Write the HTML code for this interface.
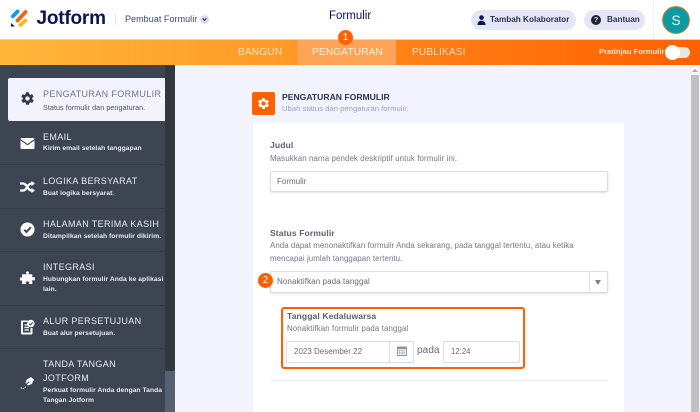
<!DOCTYPE html>
<html lang="id">
<head>
<meta charset="utf-8">
<style>
html,body{margin:0;padding:0;width:700px;height:412px;overflow:hidden;background:#f3f3fe;font-family:"Liberation Sans",sans-serif}
.a{position:absolute;white-space:nowrap;line-height:1}
.b{position:absolute;box-sizing:border-box}
.st{color:#e8ebf3;font-size:9px;letter-spacing:.37px}
.sd{color:#e8ebf3;font-size:6.7px;letter-spacing:.07px;font-weight:bold}
.sep{position:absolute;left:0;width:165px;height:1px;background:#343b46}
.lbl{color:#5c6070;font-size:8.6px;font-weight:bold;letter-spacing:.08px}
.d{color:#74778a;font-size:7.9px;letter-spacing:.1px}
</style>
</head>
<body>
<div class="b" style="left:0;top:0;width:700px;height:39px;background:#fff"></div>
<svg class="b" style="left:10px;top:8px" width="19" height="20" viewBox="0 0 19 20">
<path d="M2.800 8.300 L7.500 3.500" stroke="#0a9bf0" stroke-width="3.800" stroke-linecap="round"/>
<path d="M7.500 12.500 L15.500 4" stroke="#ff6100" stroke-width="3.800" stroke-linecap="round"/>
<path d="M10.500 17 L15.500 12.500" stroke="#ffb629" stroke-width="3.800" stroke-linecap="round"/>
<path d="M1 15 L1 18.500 L5 18.500 Z" fill="#0a1551"/>
</svg>
<div class="a" style="left:36.500px;top:9px;font-size:19px;font-weight:bold;color:#0a1551;letter-spacing:-.2px">Jotform</div>
<div class="b" style="left:115px;top:14px;width:1px;height:11px;background:#e3e5ee"></div>
<div class="a" style="left:125px;top:15px;font-size:9px;color:#3f4868;letter-spacing:.05px">Pembuat Formulir</div>
<div class="b" style="left:200px;top:15px;width:9px;height:9px;border-radius:50%;background:#d9dcf0"></div>
<svg class="b" style="left:202px;top:17px" width="5" height="5" viewBox="0 0 5 5"><path d="M.7 1.400 L2.500 3.400 L4.300 1.400" stroke="#2c3459" stroke-width="1.100" fill="none"/></svg>
<div class="a" style="left:329px;top:11px;font-size:11.500px;color:#0a1551">Formulir</div>

<div class="b" style="left:471px;top:10px;width:105px;height:20px;border-radius:10px;background:#e5e6f5"></div>
<svg class="b" style="left:477px;top:15px" width="9" height="10" viewBox="0 0 9 10"><circle cx="4.500" cy="2.600" r="2.300" fill="#0a1551"/><path d="M.5 10 C.5 6.800 2.300 5.800 4.500 5.800 C6.700 5.800 8.500 6.800 8.500 10 Z" fill="#0a1551"/></svg>
<div class="a" style="left:490px;top:15.500px;font-size:8.200px;font-weight:bold;color:#2b3358">Tambah Kolaborator</div>
<div class="b" style="left:584px;top:10px;width:61px;height:20px;border-radius:10px;background:#e5e6f5"></div>
<div class="b" style="left:591px;top:15px;width:10px;height:10px;border-radius:50%;background:#1d2338;color:#e5e6f5;font-size:7.500px;font-weight:bold;text-align:center;line-height:10px">?</div>
<div class="a" style="left:607px;top:15.500px;font-size:8.200px;font-weight:bold;color:#2b3358">Bantuan</div>
<div class="b" style="left:653px;top:0;width:1px;height:39px;background:#eceef5"></div>
<div class="b" style="left:662px;top:6px;width:28px;height:28px;border-radius:50%;background:#0e9aa3;border:1px solid #d9853c;color:#e4f7f8;font-size:14px;text-align:center;line-height:26px">S</div>

<div class="b" style="left:0;top:39px;width:700px;height:26px;background:linear-gradient(90deg,#ffb73a 0%,#ff9a26 40%,#ff7a12 65%,#ff6100 100%);border-top:1px solid #ffd089"></div>
<div class="b" style="left:297px;top:40px;width:99px;height:25px;background:#ffa456"></div>
<div class="a" style="left:238px;top:48px;font-size:10.200px;color:#ffe3c0;letter-spacing:.1px">BANGUN</div>
<div class="a" style="left:312px;top:48px;font-size:10.200px;color:#fff0e0;letter-spacing:.1px">PENGATURAN</div>
<div class="a" style="left:412px;top:48px;font-size:10.200px;color:#ffdcc0;letter-spacing:.1px">PUBLIKASI</div>
<div class="b" style="left:338px;top:30px;width:15px;height:15px;border-radius:50%;background:#ff6100;color:#fff;font-size:10px;text-align:center;line-height:15px">1</div>
<div class="a" style="left:599px;top:48px;font-size:7.600px;font-weight:bold;color:#ffe9d6">Pratinjau Formulir</div>
<div class="b" style="left:666px;top:47px;width:24px;height:11px;border-radius:6px;background:#e4e8dd"></div>
<div class="b" style="left:665px;top:45px;width:15px;height:15px;border-radius:50%;background:#fff"></div>

<!-- sidebar -->
<div class="b" style="left:0;top:65px;width:175px;height:347px;background:#3e4552"></div>
<div class="b" style="left:165px;top:65px;width:10px;height:306px;background:#33383f;border-radius:0 0 3px 3px"></div>
<div class="b" style="left:165px;top:371px;width:10px;height:41px;background:#566070"></div>
<div class="b" style="left:8px;top:78px;width:157px;height:43px;background:#f3f3fe;border-radius:2px 0 0 2px"></div>
<svg class="b" style="left:20px;top:91px" width="15" height="15" viewBox="0 0 24 24"><path fill="#343b46" d="M19.400 13c.1-.3.1-.7.1-1s0-.7-.1-1l2.100-1.600c.2-.2.2-.4.1-.6l-2-3.500c-.1-.2-.4-.3-.6-.2l-2.500 1c-.5-.4-1.100-.7-1.700-1l-.4-2.600c0-.3-.2-.5-.5-.5h-4c-.3 0-.5.2-.5.5l-.4 2.600c-.6.3-1.200.6-1.700 1l-2.500-1c-.2-.1-.5 0-.6.2l-2 3.500c-.1.200-.1.500.1.600L4.600 11c-.1.300-.1.700-.1 1s0 .7.100 1l-2.100 1.600c-.2.200-.2.400-.1.600l2 3.500c.1.200.4.300.6.200l2.500-1c.5.400 1.100.7 1.700 1l.4 2.600c0 .3.2.5.5.5h4c.3 0 .5-.2.5-.5l.4-2.600c.6-.3 1.200-.6 1.700-1l2.500 1c.2.100.5 0 .6-.2l2-3.500c.1-.2.1-.5-.1-.6zM12 15.500a3.500 3.500 0 1 1 0-7 3.500 3.500 0 0 1 0 7z"/></svg>
<div class="a" style="left:43px;top:89.500px;font-size:9px;color:#6f7488;letter-spacing:.37px">PENGATURAN FORMULIR</div>
<div class="a" style="left:43px;top:103.500px;font-size:7.200px;color:#4b5064;letter-spacing:.05px">Status formulir dan pengaturan.</div>

<svg class="b" style="left:20px;top:138px" width="15" height="11" viewBox="0 0 15 11"><path fill="#fff" d="M.5 1 Q.5 0 1.500 0 H13.500 Q14.500 0 14.500 1 L7.500 6 Z"/><path fill="#fff" d="M.5 2.400 L7.500 7.400 L14.500 2.400 V10 Q14.500 11 13.500 11 H1.500 Q.5 11 .5 10 Z"/></svg>
<div class="a st" style="left:43px;top:133px">EMAIL</div>
<div class="a sd" style="left:43px;top:146px">Kirim email setelah tanggapan</div>
<div class="sep" style="top:164px"></div>

<svg class="b" style="left:20px;top:181px" width="15" height="12" viewBox="0 0 15 12"><path d="M0 2.500 H3 C7 2.500 7.500 9.500 11.500 9.500 H13 M0 9.500 H3 C7 9.500 7.500 2.500 11.500 2.500 H13" stroke="#fff" stroke-width="2.200" fill="none"/><path d="M11.500 0 L15 2.500 L11.500 5 Z M11.500 7 L15 9.500 L11.500 12 Z" fill="#fff"/></svg>
<div class="a st" style="left:43px;top:176.500px">LOGIKA BERSYARAT</div>
<div class="a sd" style="left:43px;top:190.500px">Buat logika bersyarat.</div>
<div class="sep" style="top:208px"></div>

<svg class="b" style="left:20px;top:222px" width="15" height="15" viewBox="0 0 15 15"><circle cx="7.500" cy="7.500" r="7" fill="#fff"/><path d="M4.200 7.800 L6.500 10 L10.800 5.200" stroke="#3e4552" stroke-width="2" fill="none"/></svg>
<div class="a st" style="left:43px;top:219.500px">HALAMAN TERIMA KASIH</div>
<div class="a sd" style="left:43px;top:233.500px">Ditampilkan setelah formulir dikirim.</div>
<div class="sep" style="top:251px"></div>

<svg class="b" style="left:20px;top:271px" width="15" height="15" viewBox="0 0 15 15"><path fill="#fff" d="M6 1.500 C6 .2 9 .2 9 1.500 C9 2.300 8.500 2.600 8.500 3.200 H12.300 V6.500 C13 6.500 13.400 6 14 6 C15.300 6 15.300 9.500 14 9.500 C13.400 9.500 13 9 12.300 9 V13 H8.800 C8.800 12.400 9.300 12 9.300 11.500 C9.300 10.200 5.700 10.200 5.700 11.500 C5.700 12 6.200 12.400 6.200 13 H2 V9.300 C1.500 9.300 1.200 9.800 .8 9.800 C-.3 9.800 -.3 6.300 .8 6.300 C1.200 6.300 1.500 6.800 2 6.800 V3.200 H6.500 C6.500 2.600 6 2.300 6 1.500 Z"/></svg>
<div class="a st" style="left:43px;top:263px">INTEGRASI</div>
<div class="a sd" style="left:43px;top:276.500px">Hubungkan formulir Anda ke aplikasi</div>
<div class="a sd" style="left:43px;top:287px">lain.</div>
<div class="sep" style="top:305px"></div>

<svg class="b" style="left:20px;top:319px" width="15" height="16" viewBox="0 0 15 16"><path fill="#fff" d="M1.500 1.500 H8 V3 H3 V13.500 H10.500 V9 H12.500 V14 Q12.500 15.500 11 15.500 H2.500 Q1 15.500 1 14 V2 Q1 1.500 1.500 1.500 Z"/><path d="M4.500 6 H8 M4.500 8.500 H9 M4.500 11 H9" stroke="#fff" stroke-width="1.300"/><circle cx="10.800" cy="4.500" r="3.700" fill="#fff"/><path d="M9 4.600 L10.400 6 L12.700 3.400" stroke="#3e4552" stroke-width="1.100" fill="none"/></svg>
<div class="a st" style="left:43px;top:316.500px">ALUR PERSETUJUAN</div>
<div class="a sd" style="left:43px;top:330.500px">Buat alur persetujuan.</div>
<div class="sep" style="top:348px"></div>

<svg class="b" style="left:20px;top:376px" width="15" height="14" viewBox="0 0 15 14"><path fill="#fff" d="M9.500 2 L11 1 L14 3.800 L13 5.500 L11.800 8 L8 9.500 L7 8.500 L9.500 6 L8.800 5.300 L6.300 7.800 L5.500 7 L7 3.200 Z"/><path d="M.8 11.500 C2 13.300 4.500 12.500 6 10.500" stroke="#fff" stroke-width=".9" fill="none" stroke-dasharray="1.500 .7"/></svg>
<div class="a st" style="left:43px;top:360px">TANDA TANGAN</div>
<div class="a st" style="left:43px;top:374px">JOTFORM</div>
<div class="a sd" style="left:43px;top:387.500px">Perkuat formulir Anda dengan Tanda</div>
<div class="a sd" style="left:43px;top:397.500px">Tangan Jotform</div>

<!-- page scrollbar -->
<div class="b" style="left:690px;top:65px;width:10px;height:347px;background:#f3f3fe"></div>
<div class="b" style="left:691px;top:75px;width:8px;height:337px;background:#c1c1c1"></div>
<div class="b" style="left:692px;top:69px;width:0;height:0;border-left:3px solid transparent;border-right:3px solid transparent;border-bottom:3px solid #a8a8a8"></div>

<!-- heading -->
<div class="b" style="left:252px;top:92px;width:23px;height:23px;border-radius:2px;background:#ff6100"></div>
<svg class="b" style="left:257px;top:97px" width="13" height="13" viewBox="0 0 24 24"><path fill="#fff" d="M19.400 13c.1-.3.1-.7.1-1s0-.7-.1-1l2.100-1.600c.2-.2.2-.4.1-.6l-2-3.500c-.1-.2-.4-.3-.6-.2l-2.500 1c-.5-.4-1.100-.7-1.700-1l-.4-2.600c0-.3-.2-.5-.5-.5h-4c-.3 0-.5.2-.5.5l-.4 2.600c-.6.3-1.200.6-1.700 1l-2.500-1c-.2-.1-.5 0-.6.2l-2 3.500c-.1.200-.1.500.1.600L4.600 11c-.1.300-.1.700-.1 1s0 .7.100 1l-2.100 1.600c-.2.200-.2.400-.1.600l2 3.500c.1.200.4.300.6.200l2.500-1c.5.400 1.100.7 1.700 1l.4 2.600c0 .3.2.5.5.5h4c.3 0 .5-.2.5-.5l.4-2.600c.6-.3 1.200-.6 1.700-1l2.500 1c.2.100.5 0 .6-.2l2-3.500c.1-.2.1-.5-.1-.6zM12 16a4 4 0 1 1 0-8 4 4 0 0 1 0 8z"/></svg>
<div class="a" style="left:282px;top:93px;font-size:8.600px;font-weight:bold;color:#2b3358">PENGATURAN FORMULIR</div>
<div class="a" style="left:282px;top:105px;font-size:7.700px;color:#9a9fc4">Ubah status dan pengaturan formulir.</div>

<!-- card -->
<div class="b" style="left:253px;top:123px;width:371px;height:289px;background:#fff;border-radius:2px 2px 0 0"></div>
<div class="a lbl" style="left:270px;top:141px">Judul</div>
<div class="a d" style="left:270px;top:155px">Masukkan nama pendek deskriptif untuk formulir ini.</div>
<div class="b" style="left:270px;top:171px;width:338px;height:21px;border:1px solid #dcdde3;border-radius:2px;background:#fff;box-shadow:0 1px 2px rgba(0,0,0,.12)"></div>
<div class="a" style="left:277px;top:178px;font-size:8px;color:#666a78">Formulir</div>

<div class="a lbl" style="left:270px;top:229px">Status Formulir</div>
<div class="a d" style="left:270px;top:242px;letter-spacing:.06px">Anda dapat menonaktifkan formulir Anda sekarang, pada tanggal tertentu, atau ketika</div>
<div class="a d" style="left:270px;top:255px;letter-spacing:.06px">mencapai jumlah tanggapan tertentu.</div>
<div class="b" style="left:270px;top:271px;width:338px;height:22px;border:1px solid #dcdde3;border-radius:2px;background:#fff;box-shadow:0 1px 2px rgba(0,0,0,.12)"></div>
<div class="b" style="left:589px;top:272px;width:1px;height:20px;background:#e2e3e8"></div>
<div class="b" style="left:595px;top:280px;width:0;height:0;border-left:3.500px solid transparent;border-right:3.500px solid transparent;border-top:5px solid #8c7f6c"></div>
<div class="a" style="left:277px;top:277.500px;font-size:8px;color:#666a78;letter-spacing:.09px">Nonaktifkan pada tanggal</div>
<div class="b" style="left:258px;top:273px;width:15px;height:15px;border-radius:50%;background:#ff6100;color:#fff;font-size:10px;text-align:center;line-height:15px">2</div>

<div class="b" style="left:281px;top:307px;width:244px;height:62px;border:2px solid #ff6100;border-radius:3px;background:#fff"></div>
<div class="a lbl" style="left:287px;top:312px">Tanggal Kedaluwarsa</div>
<div class="a d" style="left:287px;top:325px">Nonaktifkan formulir pada tanggal</div>
<div class="b" style="left:286px;top:341px;width:128px;height:22px;border:1px solid #dcdde3;border-radius:2px;background:#fff"></div>
<div class="b" style="left:389px;top:341px;width:1px;height:22px;background:#dcdde3"></div>
<div class="a" style="left:294px;top:348px;font-size:8px;color:#666a78">2023 Desember 22</div>
<svg class="b" style="left:397px;top:346px" width="10" height="10" viewBox="0 0 10 10"><rect x=".5" y="1" width="9" height="8.500" fill="#fff" stroke="#8d97a3"/><rect x=".5" y="1" width="9" height="2.300" fill="#8d97a3"/><path d="M2 4.800 H8 M2 6.300 H8 M2 7.800 H8" stroke="#8d97a3" stroke-dasharray="1 .6"/></svg>
<div class="a" style="left:417px;top:346px;font-size:10px;color:#666a78;letter-spacing:.1px">pada</div>
<div class="b" style="left:443px;top:341px;width:77px;height:22px;border:1px solid #dcdde3;border-radius:2px;background:#fff"></div>
<div class="a" style="left:451px;top:348px;font-size:7.800px;color:#666a78">12:24</div>
<div class="b" style="left:270px;top:380px;width:338px;height:1px;background:#e9eaef"></div>
</body>
</html>
